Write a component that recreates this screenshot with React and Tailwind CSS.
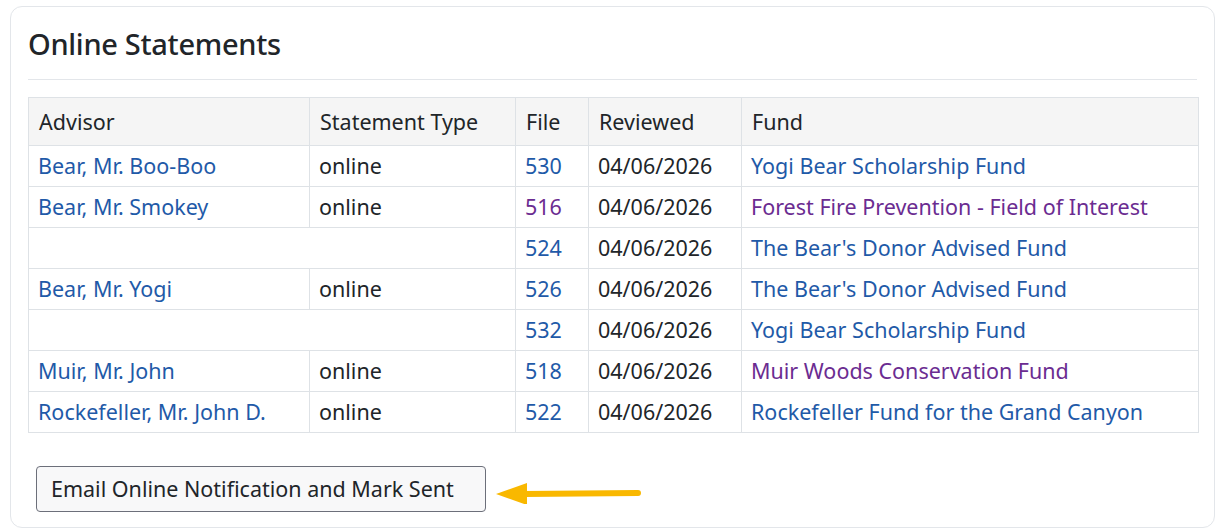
export default function App() {
  const blue = "text-[#1f5aa8]";
  const purple = "text-[#6b2c91]";
  const rows = [
    ["Bear, Mr. Boo-Boo", "online", "530", blue, "Yogi Bear Scholarship Fund", blue],
    ["Bear, Mr. Smokey", "online", "516", purple, "Forest Fire Prevention - Field of Interest", purple],
    ["", "", "524", blue, "The Bear's Donor Advised Fund", blue],
    ["Bear, Mr. Yogi", "online", "526", blue, "The Bear's Donor Advised Fund", blue],
    ["", "", "532", blue, "Yogi Bear Scholarship Fund", blue],
    ["Muir, Mr. John", "online", "518", blue, "Muir Woods Conservation Fund", purple],
    ["Rockefeller, Mr. John D.", "online", "522", blue, "Rockefeller Fund for the Grand Canyon", blue],
  ];
  const td = "border border-[#dee2e6] px-[9px] h-[41px] whitespace-nowrap overflow-hidden";
  return (
    <div className="bg-white w-[1221px] h-[531px] pt-[6px] pl-[10px] pr-[6px] pb-[3px] text-[#212529]" style={{ fontFamily: '"Noto Sans", sans-serif' }}>
      <div className="h-full border border-[#e3e6ea] rounded-[12px] px-[17px]">
        <h1 className="text-[29px] font-medium h-[73px] pt-[18px] leading-[38px] border-b border-[#e3e6ea] tracking-[-0.3px]">Online Statements</h1>
        <table className="mt-[17px] w-[1171px] border-collapse text-[21.5px] leading-[30px] table-fixed">
          <colgroup>
            <col className="w-[281px]" /><col className="w-[206px]" /><col className="w-[73px]" /><col className="w-[153px]" /><col />
          </colgroup>
          <thead>
            <tr className="bg-[#f5f5f5] text-left">
              {["Advisor", "Statement Type", "File", "Reviewed", "Fund"].map((h) => (
                <th key={h} className="border border-[#dee2e6] font-normal h-[48px] px-[10px] whitespace-nowrap">{h}</th>
              ))}
            </tr>
          </thead>
          <tbody>
            {rows.map((r, i) => (
              <tr key={i}>
                {r[0] ? (
                  <>
                    <td className={`${td} ${blue}`}>{r[0]}</td>
                    <td className={td}>{r[1]}</td>
                  </>
                ) : (
                  <td colSpan={2} className={td}></td>
                )}
                <td className={`${td} ${r[3]}`}>{r[2]}</td>
                <td className={td}>04/06/2026</td>
                <td className={`${td} ${r[5]}`}>{r[4]}</td>
              </tr>
            ))}
          </tbody>
        </table>
        <div className="flex items-center mt-[33px] ml-[8px]">
          <button className="h-[46px] w-[450px] border border-[#6c6f7a] rounded-[4px] bg-[#f8f8f9] text-[21.5px] whitespace-nowrap text-left pl-[14px]">Email Online Notification and Mark Sent</button>
          <svg width="150" height="30" viewBox="0 0 150 30" className="ml-[8px]">
            <path d="M30 20 L144 19" stroke="#f9b800" strokeWidth="6" strokeLinecap="round" />
            <path d="M2 20 L33 9 L33 31 Z" fill="#f9b800" />
          </svg>
        </div>
      </div>
    </div>
  );
}
